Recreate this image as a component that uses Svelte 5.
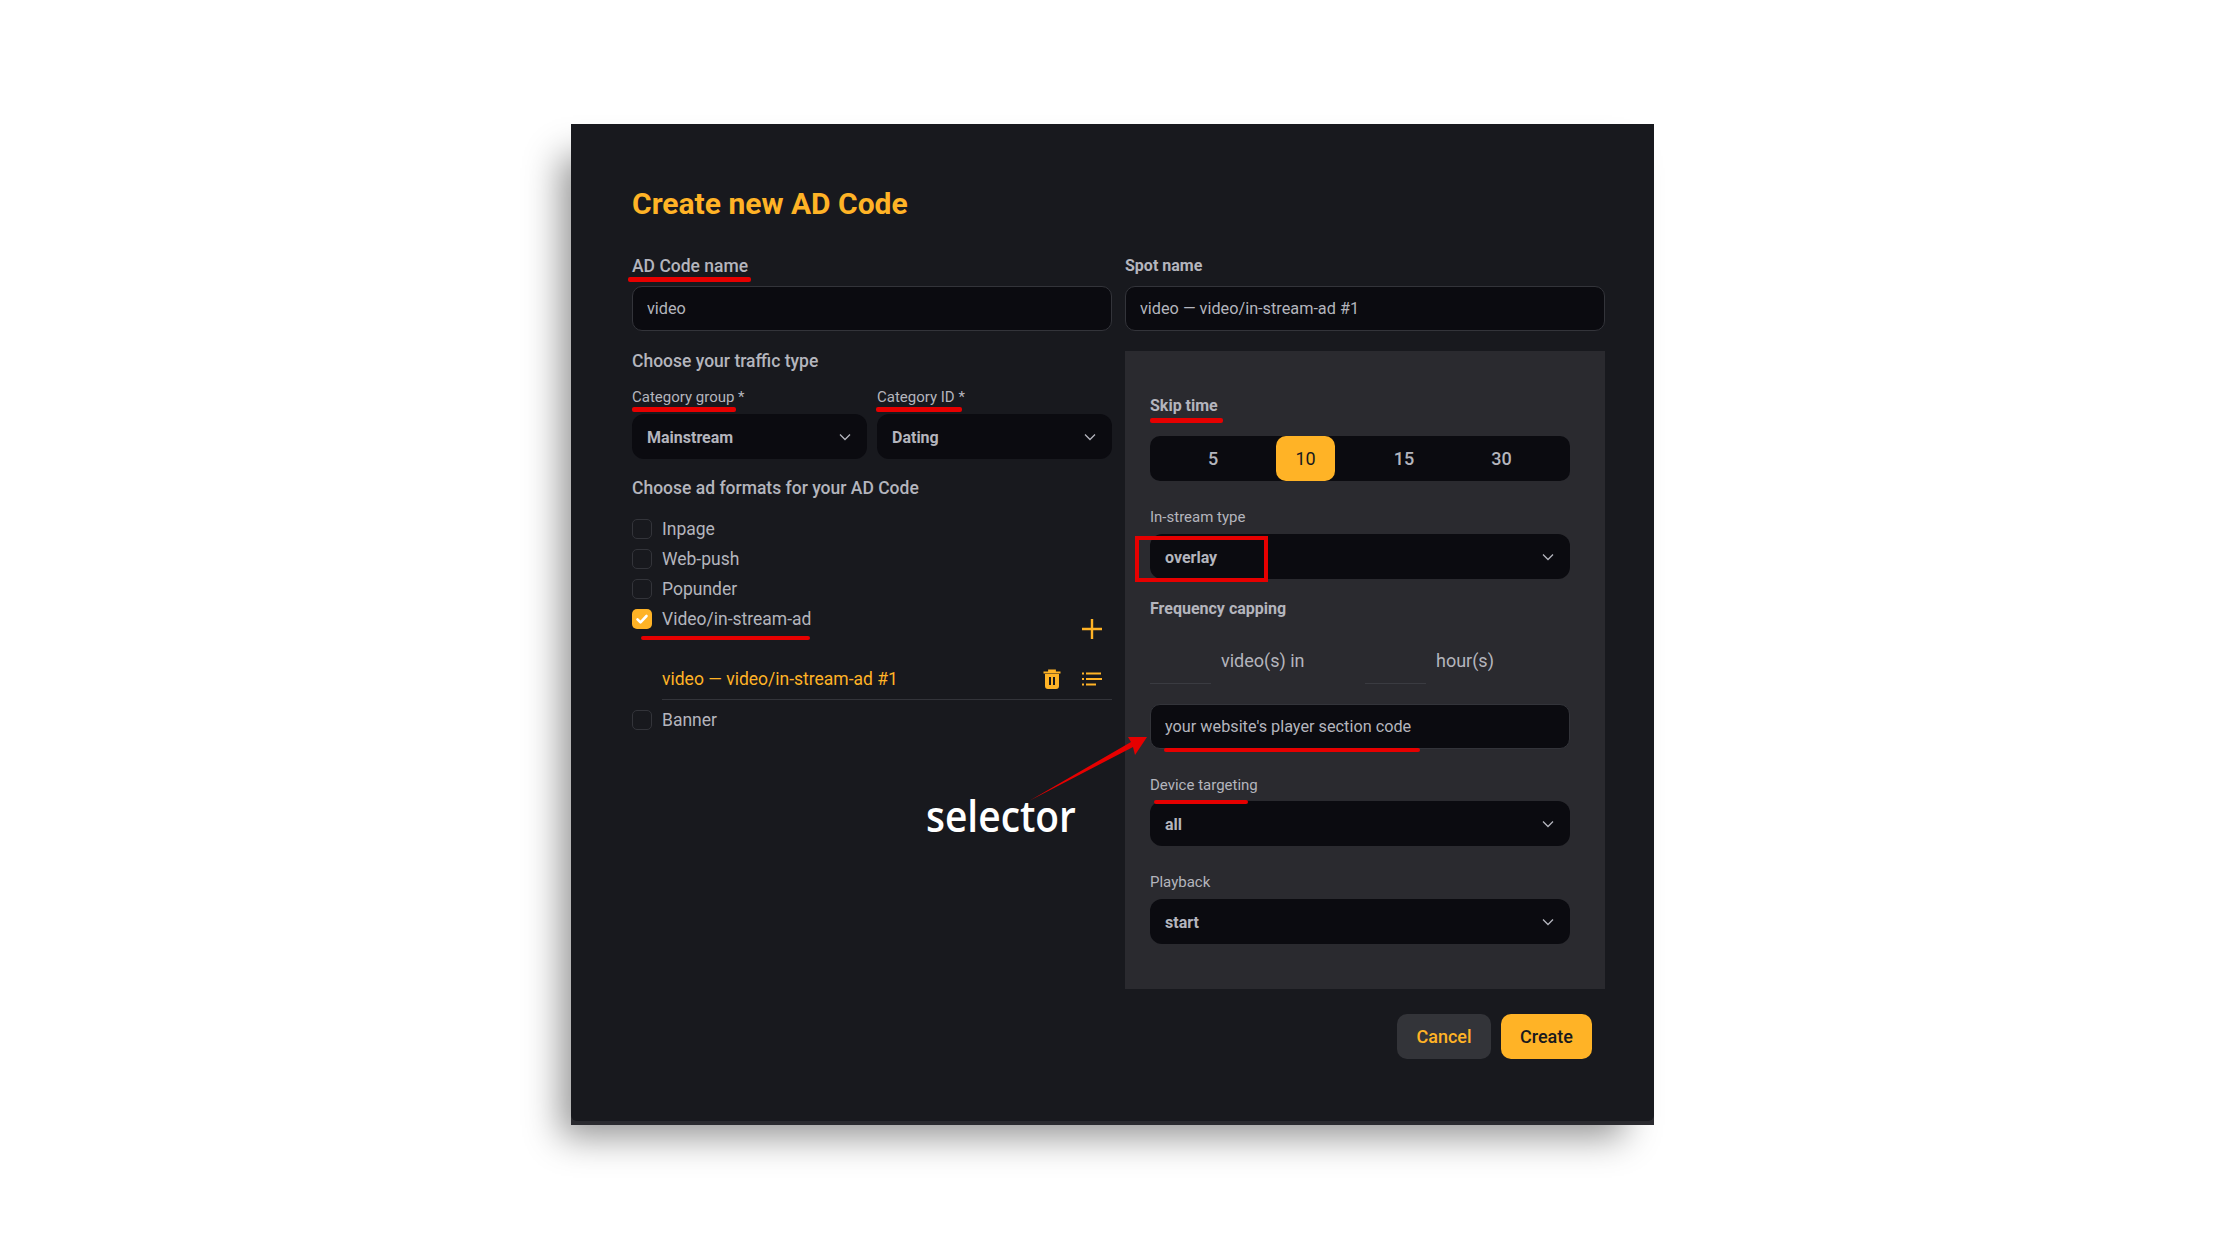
<script>
  const formats = ['Inpage', 'Web-push', 'Popunder'];
  const skipTimes = [5, 10, 15, 30];

  // red hand-drawn marks, in page coordinates
  const marks = [
    [628, 277, 123, 5],
    [632, 407, 104, 5],
    [876, 407, 86, 5],
    [641, 636, 169, 4],
    [1150, 418, 73, 5],
    [1164, 748, 256, 4],
    [1154, 800, 94, 4]
  ];
</script>

<main class="page">
  <div class="modal">
    <div class="sheet">
      <h1>Create new AD Code</h1>

      <div class="columns">
        <div class="field">
          <span class="name">AD Code name</span>
          <input class="text-input" value="video" readonly />
        </div>
        <div class="field">
          <span class="name strong">Spot name</span>
          <input class="text-input" value="video — video/in-stream-ad #1" readonly />
        </div>

        <section class="left">
          <h2>Choose your traffic type</h2>
          <div class="pair">
            <div>
              <span class="small">Category group *</span>
              {@render dropdown('Mainstream')}
            </div>
            <div>
              <span class="small">Category ID *</span>
              {@render dropdown('Dating')}
            </div>
          </div>

          <h2 class="formats-title">Choose ad formats for your AD Code</h2>
          <ul class="formats">
            {#each formats as format}
              <li><span class="box"></span><span class="label">{format}</span></li>
            {/each}
            <li class="picked">
              <span class="box on">
                <svg viewBox="0 0 20 20" width="20" height="20" aria-hidden="true">
                  <path d="M5.5 10.3l3 3 6-6.3" fill="none" stroke="#fff" stroke-width="2.6" stroke-linecap="round" stroke-linejoin="round" />
                </svg>
              </span>
              <span class="label">Video/in-stream-ad</span>
              <svg class="plus" viewBox="0 0 20 20" width="20" height="20" aria-hidden="true">
                <path d="M10 0v20M0 10h20" fill="none" stroke="#ffb326" stroke-width="2.4" />
              </svg>
            </li>
          </ul>
          <div class="spot">
            <span>video — video/in-stream-ad #1</span>
            <svg class="trash" viewBox="0 0 18 20" width="18" height="20" aria-hidden="true">
              <path d="M6 3V1.500h6V3M0.500 3.500h17" fill="none" stroke="#ffb326" stroke-width="1.800" />
              <path fill-rule="evenodd" d="M2 5h14v12a3 3 0 0 1-3 3H5a3 3 0 0 1-3-3zM6 8v8h2V8zm4 0v8h2V8z" fill="#ffb326" />
            </svg>
            <svg viewBox="0 0 20 14" width="20" height="14" aria-hidden="true">
              <path d="M4 1.500h15M0 1.500h2M4 7h16M0 7h2M4 12.500h10M0 12.500h2" fill="none" stroke="#ffb326" stroke-width="2" />
            </svg>
          </div>
          <ul class="formats last">
            <li><span class="box"></span><span class="label">Banner</span></li>
          </ul>
        </section>

        <section class="panel">
          <span class="name strong skip">Skip time</span>
          <div class="segments">
            {#each skipTimes as t}
              <span class:active={t === 10}>{t}</span>
            {/each}
          </div>

          <span class="small gap">In-stream type</span>
          {@render dropdown('overlay')}

          <span class="name strong freq">Frequency capping</span>
          <div class="capping">
            <span class="blank"></span>
            <span class="unit first">video(s) in</span>
            <span class="blank"></span>
            <span class="unit">hour(s)</span>
          </div>

          <input class="text-input selector-input" value="your website's player section code" readonly />

          <span class="small gap tight">Device targeting</span>
          {@render dropdown('all')}

          <span class="small gap">Playback</span>
          {@render dropdown('start')}
        </section>
      </div>

      <footer>
        <button type="button" class="cancel">Cancel</button>
        <button type="button" class="create">Create</button>
      </footer>
    </div>

    <svg class="marks" viewBox="571 124 1083 1001" aria-hidden="true">
      {#each marks as [x, y, w, h]}
        <rect {x} {y} width={w} height={h} rx="2" fill="#e60000" />
      {/each}
      <rect x="1137" y="538" width="129" height="42" fill="none" stroke="#e60000" stroke-width="4" />
      <path d="M1029 801L1131 742L1128 737L1147 737L1135 755L1133 747Z" fill="#e60000" />
    </svg>
    <div class="callout">selector</div>
  </div>
</main>

{#snippet dropdown(value)}
  <div class="dropdown">
    <span>{value}</span>
    <svg viewBox="0 0 12 8" width="12" height="8" aria-hidden="true">
      <path d="M1 1.500l5 5 5-5" fill="none" stroke="#b4b5bd" stroke-width="1.300" />
    </svg>
  </div>
{/snippet}

<style>
  :global(body) {
    margin: 0;
    background: #fff;
  }

  .page {
    display: flex;
    justify-content: center;
    height: 1248px;
    padding: 124px 1px 0 0;
    box-sizing: border-box;
    font-family: Roboto, "Liberation Sans", sans-serif;
    color: #b4b5bd;
  }

  .modal {
    position: relative;
    width: 1083px;
    height: 1001px;
    background: #2a2a2f;
    box-shadow: -20px 22px 34px -10px rgba(0, 0, 0, 0.42);
  }

  .sheet {
    height: 997px;
    box-sizing: border-box;
    padding: 60px 49px 0 61px;
    background: #18191e;
    border-radius: 0 0 6px 6px;
  }

  h1 {
    margin: 0 0 29px;
    font-size: 30px;
    line-height: 40px;
    font-weight: 700;
    color: #ffb326;
  }

  .columns {
    display: grid;
    grid-template-columns: 480px 480px;
    column-gap: 13px;
    row-gap: 20px;
  }

  .field {
    display: flex;
    flex-direction: column;
    gap: 9px;
  }

  .name {
    display: block;
    font-size: 17.500px;
    line-height: 24px;
    font-weight: 500;
  }

  .field .name {
    position: relative;
    top: 1px;
  }

  .name.strong {
    font-size: 16px;
    font-weight: 700;
  }

  .small {
    display: block;
    font-size: 15px;
    line-height: 18px;
    margin-bottom: 8px;
  }

  .text-input {
    display: block;
    width: 100%;
    height: 45px;
    box-sizing: border-box;
    padding: 0 14px;
    border: 1px solid #33343a;
    border-radius: 10px;
    background: #0b0b10;
    color: #b4b5bd;
    font: 400 16.250px Roboto, sans-serif;
    outline: none;
  }

  h2 {
    margin: 0;
    font-size: 17.500px;
    line-height: 20px;
    font-weight: 500;
  }

  .pair {
    display: grid;
    grid-template-columns: 235px 235px;
    gap: 10px;
    margin-top: 17px;
  }

  .dropdown {
    display: flex;
    align-items: center;
    justify-content: space-between;
    height: 45px;
    padding: 0 16px 0 15px;
    border-radius: 12px;
    background: #0b0b10;
    font-size: 16px;
    font-weight: 700;
  }

  .dropdown span {
    padding-top: 2px;
  }

  .formats-title {
    margin-top: 19px;
  }

  .formats {
    list-style: none;
    margin: 16px 0 0;
    padding: 0;
    font-size: 17.500px;
  }

  .formats.last {
    margin-top: 5px;
  }

  .formats li {
    display: flex;
    align-items: center;
    gap: 10px;
    height: 30px;
  }

  .label {
    padding-bottom: 1px;
  }

  .box {
    flex: none;
    width: 20px;
    height: 20px;
    box-sizing: border-box;
    border: 1px solid #33343a;
    border-radius: 5px;
  }

  .box.on {
    border: 0;
    background: #ffb326;
  }

  .box svg {
    display: block;
  }

  .plus {
    margin-left: auto;
    margin-right: 10px;
    transform: translateY(10px);
  }

  .spot {
    display: flex;
    align-items: center;
    height: 40px;
    margin: 25px 0 0 30px;
    border-bottom: 1px solid #33343a;
    font-size: 17.500px;
    color: #ffb326;
  }

  .spot span {
    flex: 1;
  }

  .trash {
    margin-right: 21px;
  }

  .spot svg:last-child {
    margin-right: 10px;
  }

  .panel {
    background: #2a2a2f;
    padding: 44px 35px 45px 25px;
  }

  .skip {
    padding-top: 1px;
    line-height: 20px;
    margin-bottom: 20px;
  }

  .segments {
    display: grid;
    grid-template-columns: 126px 59px 138px 57px;
    height: 45px;
    border-radius: 10px;
    background: #0b0b10;
    font-size: 18px;
    font-weight: 500;
  }

  .segments span {
    display: flex;
    align-items: center;
    justify-content: center;
    border-radius: 10px;
  }

  .segments .active {
    background: #ffb326;
    color: #18191e;
    font-weight: 400;
  }

  .gap {
    margin-top: 27px;
  }

  .tight {
    margin-bottom: 7px;
  }

  .freq {
    padding-top: 1px;
    line-height: 20px;
    margin-top: 19px;
  }

  .capping {
    display: flex;
    align-items: center;
    height: 44px;
    margin-top: 21px;
    font-size: 18px;
  }

  .blank {
    width: 61px;
    height: 43px;
    border-bottom: 1px solid #3a3b41;
  }

  .unit {
    margin-left: 10px;
    padding-bottom: 3px;
  }

  .unit.first {
    width: 144px;
  }

  .selector-input {
    margin-top: 20px;
  }

  footer {
    display: flex;
    justify-content: flex-end;
    gap: 10px;
    margin: 25px 13px 0 0;
  }

  button {
    height: 45px;
    border: 0;
    border-radius: 10px;
    font: 500 18px Roboto, sans-serif;
  }

  .cancel {
    width: 94px;
    background: #333439;
    color: #ffb326;
  }

  .create {
    width: 91px;
    background: #ffb326;
    color: #18191e;
  }

  .marks {
    position: absolute;
    inset: 0;
    width: 1083px;
    height: 1001px;
    pointer-events: none;
  }

  .callout {
    position: absolute;
    left: 355px;
    top: 662px;
    font-family: "Open Sans", sans-serif;
    font-size: 43px;
    line-height: 60px;
    font-weight: 600;
    color: #fff;
    transform: scaleX(0.905);
    transform-origin: left center;
  }
</style>
